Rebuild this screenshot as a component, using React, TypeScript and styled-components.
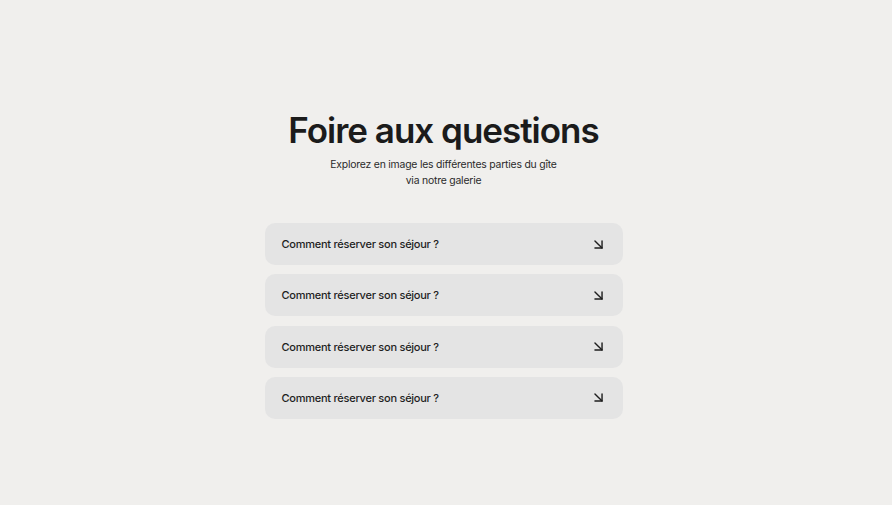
import styled, { createGlobalStyle } from "styled-components";
import { ArrowDownRight } from "lucide-react";

const GlobalStyle = createGlobalStyle`
  html, body {
    margin: 0;
    padding: 0;
    background: #f0efed;
  }
  body {
    font-family: Inter, "Liberation Sans", sans-serif;
    color: #1c1c1c;
  }
`;

const Page = styled.main`
  min-height: 505px;
  display: flex;
  flex-direction: column;
  align-items: center;
  padding: 108px 5px 0 0;
  box-sizing: border-box;
`;

const Title = styled.h1`
  margin: 0;
  font-size: 35px;
  font-weight: 600;
  letter-spacing: -1px;
  line-height: 44px;
  color: #1b1b1b;
`;

const Subtitle = styled.p`
  margin: 5px 0 0;
  font-size: 10.4px;
  line-height: 16px;
  text-align: center;
  letter-spacing: -0.2px;
  color: #2a2a2a;
`;

const List = styled.ul`
  list-style: none;
  margin: 34px 0 0;
  padding: 0;
  width: 358px;
  display: flex;
  flex-direction: column;
  gap: 9.3px;
`;

const Item = styled.li`
  height: 42px;
  border-radius: 10px;
  background: #e4e4e4;
  display: flex;
  align-items: center;
  justify-content: space-between;
  padding: 0 16px 0 17px;
  box-sizing: border-box;
  cursor: pointer;
`;

const Question = styled.span`
  font-size: 11px;
  font-weight: 500;
  letter-spacing: -0.25px;
  color: #1e1e1e;
`;

const questions = [
  "Comment réserver son séjour ?",
  "Comment réserver son séjour ?",
  "Comment réserver son séjour ?",
  "Comment réserver son séjour ?",
];

function App() {
  return (
    <>
      <GlobalStyle />
      <Page>
        <Title>Foire aux questions</Title>
        <Subtitle>
          Explorez en image les différentes parties du gîte
          <br />
          via notre galerie
        </Subtitle>
        <List>
          {questions.map((q, i) => (
            <Item key={i}>
              <Question>{q}</Question>
              <ArrowDownRight size={17} strokeWidth={2} color="#1e1e1e" />
            </Item>
          ))}
        </List>
      </Page>
    </>
  );
}

export default App;
